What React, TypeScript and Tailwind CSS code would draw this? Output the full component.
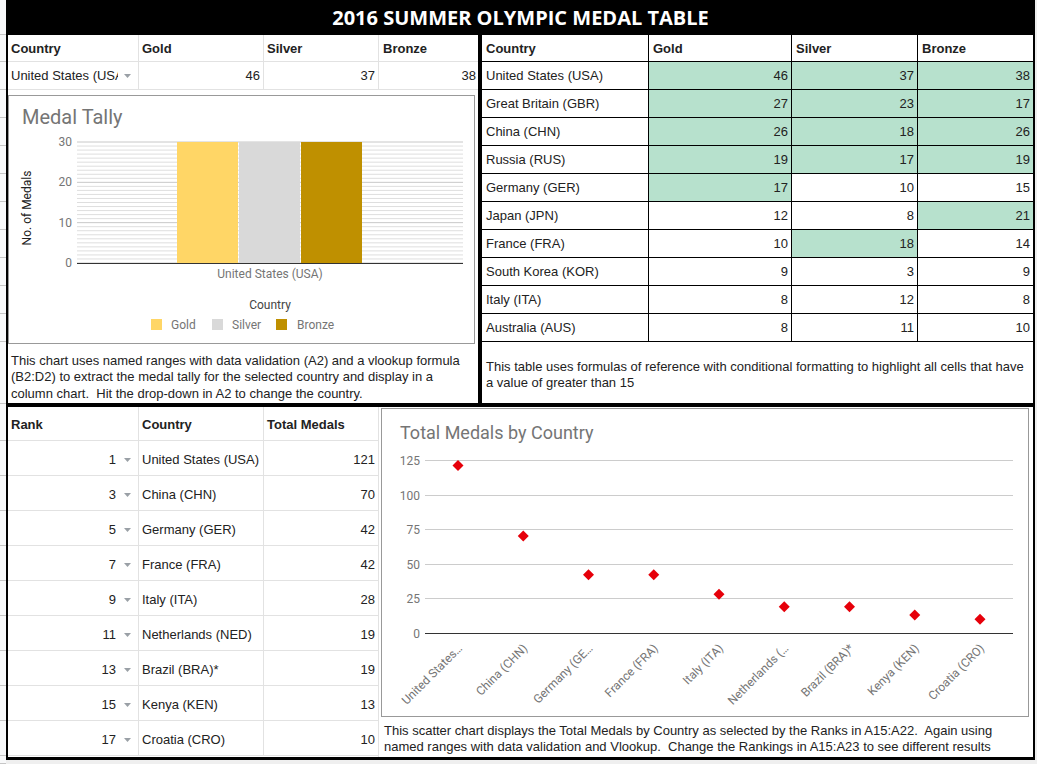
import React from 'react';

type MedalRow = [string, number, number, number];

const medalRows: MedalRow[] = [
  ['United States (USA)', 46, 37, 38],
  ['Great Britain (GBR)', 27, 23, 17],
  ['China (CHN)', 26, 18, 26],
  ['Russia (RUS)', 19, 17, 19],
  ['Germany (GER)', 17, 10, 15],
  ['Japan (JPN)', 12, 8, 21],
  ['France (FRA)', 10, 18, 14],
  ['South Korea (KOR)', 9, 3, 9],
  ['Italy (ITA)', 8, 12, 8],
  ['Australia (AUS)', 8, 11, 10],
];

const rankRows = [
  { rank: 1, country: 'United States (USA)', label: 'United States…', total: 121 },
  { rank: 3, country: 'China (CHN)', label: 'China (CHN)', total: 70 },
  { rank: 5, country: 'Germany (GER)', label: 'Germany (GE…', total: 42 },
  { rank: 7, country: 'France (FRA)', label: 'France (FRA)', total: 42 },
  { rank: 9, country: 'Italy (ITA)', label: 'Italy (ITA)', total: 28 },
  { rank: 11, country: 'Netherlands (NED)', label: 'Netherlands (…', total: 19 },
  { rank: 13, country: 'Brazil (BRA)*', label: 'Brazil (BRA)*', total: 19 },
  { rank: 15, country: 'Kenya (KEN)', label: 'Kenya (KEN)', total: 13 },
  { rank: 17, country: 'Croatia (CRO)', label: 'Croatia (CRO)', total: 10 },
];

// row heights of the sheet, mirrored in the row-header strip on the left
const gutterRows = [
  'h-[35px]', 'h-[27px]',
  'h-[28px]', 'h-[28px]', 'h-[28px]', 'h-[28px]', 'h-[28px]',
  'h-[28px]', 'h-[28px]', 'h-[28px]', 'h-[28px]', 'h-[28px]',
  'h-[62px]', 'h-[37px]',
  'h-[35px]', 'h-[35px]', 'h-[35px]', 'h-[35px]', 'h-[35px]',
  'h-[35px]', 'h-[35px]', 'h-[35px]', 'h-[35px]', 'h-[8px]',
];

const chartNote =
  'This chart uses named ranges with data validation (A2) and a vlookup formula (B2:D2) to extract the medal tally for the selected country and display in a column chart.\u00a0 Hit the drop-down in A2 to change the country.';
const tableNote =
  'This table uses formulas of reference with conditional formatting to highlight all cells that have a value of greater than 15';
const scatterNote =
  'This scatter chart displays the Total Medals by Country as selected by the Ranks in A15:A22.\u00a0 Again using named ranges with data validation and Vlookup.\u00a0 Change the Rankings in A15:A23 to see different results';

const Caret = () => (
  <svg width="7" height="4" viewBox="0 0 7 4" className="shrink-0">
    <path d="M0 0h7L3.5 4z" fill="#9aa0a6" />
  </svg>
);

const MedalTally = () => {
  const top = 142;
  const base = 263;
  const unit = (base - top) / 30;
  const lines = Array.from({ length: 31 }, (_, i) => base - i * unit);

  return (
    <svg width="465" height="247" viewBox="9 96 465 247" className="block font-['Roboto',sans-serif]">
      <text x="22" y="124" fontSize="20" fill="#757575">Medal Tally</text>
      {lines.map((y, i) => (
        <line key={i} x1="77" x2="463" y1={y} y2={y} stroke={i % 10 === 0 ? '#c8c8c8' : '#dedede'} strokeWidth="1" />
      ))}
      {[30, 20, 10, 0].map((v) => (
        <text key={v} x="72" y={base - v * unit + 4} textAnchor="end" fontSize="12" fill="#757575">{v}</text>
      ))}
      <rect x="177" y={top} width="61" height={base - top} fill="#ffd666" />
      <rect x="239" y={top} width="61" height={base - top} fill="#d9d9d9" />
      <rect x="301" y={top} width="61" height={base - top} fill="#bf9000" />
      <line x1="77" x2="463" y1={base + 0.5} y2={base + 0.5} stroke="#333" strokeWidth="1.2" />
      <text x="270" y="278" textAnchor="middle" fontSize="12" fill="#757575">United States (USA)</text>
      <text x="270" y="309" textAnchor="middle" fontSize="12" fill="#444">Country</text>
      <text transform="translate(31 208) rotate(-90)" textAnchor="middle" fontSize="12" fill="#222">No. of Medals</text>
      <rect x="151" y="319" width="11" height="11" fill="#ffd666" />
      <text x="171" y="329" fontSize="12" fill="#757575">Gold</text>
      <rect x="212" y="319" width="11" height="11" fill="#d9d9d9" />
      <text x="232" y="329" fontSize="12" fill="#757575">Silver</text>
      <rect x="276" y="319" width="11" height="11" fill="#bf9000" />
      <text x="297" y="329" fontSize="12" fill="#757575">Bronze</text>
    </svg>
  );
};

const ScatterChart = () => {
  const y0 = 633;
  const k = 1.384;

  return (
    <svg width="646" height="307" viewBox="382 409 646 307" className="block font-['Roboto',sans-serif]">
      <text x="400" y="439" fontSize="18" fill="#757575">Total Medals by Country</text>
      {[0, 25, 50, 75, 100, 125].map((v) => {
        const y = Math.round(y0 - v * k) + 0.5;
        return (
          <g key={v}>
            <line x1="425" x2="1013" y1={y} y2={y} stroke={v === 0 ? '#333' : '#cccccc'} />
            <text x="420" y={y + 4} textAnchor="end" fontSize="12" fill="#757575">{v}</text>
          </g>
        );
      })}
      {rankRows.map((r, i) => {
        const x = 458 + i * 65.25;
        const y = y0 - r.total * k;
        return (
          <g key={r.rank}>
            <path d={`M${x} ${y - 5.5}L${x + 5.5} ${y}L${x} ${y + 5.5}L${x - 5.5} ${y}Z`} fill="#e6000a" />
            <text transform={`translate(${x + 5} 649) rotate(-45)`} textAnchor="end" fontSize="12" fill="#757575">
              {r.label}
            </text>
          </g>
        );
      })}
    </svg>
  );
};

export default function App() {
  return (
    <div className="flex h-[764px] w-[1037px] overflow-hidden bg-[#efefef] font-['Liberation_Sans',Arial,sans-serif] text-[13px] text-[#222]">
      <div className="flex w-[6px] shrink-0 flex-col bg-[#f8f9fa]">
        {gutterRows.map((h, i) => (
          <div key={i} className={`${h} shrink-0 border-b border-[#c6c6c6]`} />
        ))}
      </div>

      <div className="flex h-[760px] w-[1029px] shrink-0 flex-col border-x-2 border-b-[3px] border-black bg-white">
        <div className="flex h-[35px] shrink-0 items-center justify-center bg-black font-['Open_Sans',sans-serif] text-[20px] font-bold text-white">
          2016 SUMMER OLYMPIC MEDAL TABLE
        </div>

        <div className="flex h-[368px] shrink-0">
          {/* selected country + column chart */}
          <div className="flex w-[470px] shrink-0 flex-col">
            <div className="grid h-[27px] shrink-0 grid-cols-[131px_125px_115px_99px] border-b border-[#e2e2e2] font-bold">
              <div className="flex items-center border-r border-[#e2e2e2] pl-[3px] pt-[2px]">Country</div>
              <div className="flex items-center border-r border-[#e2e2e2] pl-[3px] pt-[2px]">Gold</div>
              <div className="flex items-center border-r border-[#e2e2e2] pl-[3px] pt-[2px]">Silver</div>
              <div className="flex items-center pl-[4px] pt-[2px]">Bronze</div>
            </div>
            <div className="grid h-[28px] shrink-0 grid-cols-[131px_125px_115px_99px] border-b border-[#e2e2e2]">
              <div className="flex items-center gap-[6px] border-r border-[#e2e2e2] pl-[3px] pr-[7px] pt-[1px]">
                <span className="flex-1 overflow-hidden whitespace-nowrap">United States (USA)</span>
                <Caret />
              </div>
              <div className="flex items-center justify-end border-r border-[#e2e2e2] pr-[3px] pt-[1px]">46</div>
              <div className="flex items-center justify-end border-r border-[#e2e2e2] pr-[3px] pt-[1px]">37</div>
              <div className="flex items-center justify-end pr-[2px] pt-[1px]">38</div>
            </div>
            <div className="mt-[5px] h-[249px] w-[467px] shrink-0 border border-[#999]">
              <MedalTally />
            </div>
            <div className="flex flex-1 items-end px-[3px] pb-[1px] leading-[16.5px]">
              <p>{chartNote}</p>
            </div>
          </div>

          <div className="w-[4px] shrink-0 bg-black" />

          {/* conditional formatting table */}
          <div className="flex flex-1 flex-col">
            <div className="grid h-[27px] shrink-0 grid-cols-[167px_143px_126px_1fr] border-b border-black font-bold">
              <div className="flex items-center border-r border-black pl-[4px] pt-[2px]">Country</div>
              <div className="flex items-center border-r border-black pl-[4px] pt-[2px]">Gold</div>
              <div className="flex items-center border-r border-black pl-[4px] pt-[2px]">Silver</div>
              <div className="flex items-center pl-[4px] pt-[2px]">Bronze</div>
            </div>
            {medalRows.map(([country, g, s, b]) => (
              <div key={country} className="grid h-[28px] shrink-0 grid-cols-[167px_143px_126px_1fr] border-b border-black">
                <div className="flex items-center border-r border-black pl-[4px] pt-[1px]">{country}</div>
                {[g, s, b].map((v, i) => (
                  <div
                    key={i}
                    className={`flex items-center justify-end pr-[3px] pt-[1px] ${i < 2 ? 'border-r border-black' : ''} ${v > 15 ? 'bg-[#b7e1cd]' : ''}`}
                  >
                    {v}
                  </div>
                ))}
              </div>
            ))}
            <div className="flex flex-1 items-center px-[4px] pt-[4px] leading-[16px]">
              <p>{tableNote}</p>
            </div>
          </div>
        </div>

        <div className="h-[4px] shrink-0 bg-black" />

        <div className="flex h-[350px] shrink-0">
          {/* rank picker table */}
          <div className="flex w-[371px] shrink-0 flex-col border-r border-[#e2e2e2]">
            <div className="grid h-[34px] shrink-0 grid-cols-[131px_125px_1fr] border-b border-[#e2e2e2] font-bold">
              <div className="flex items-center border-r border-[#e2e2e2] pl-[3px] pt-[2px]">Rank</div>
              <div className="flex items-center border-r border-[#e2e2e2] pl-[3px] pt-[2px]">Country</div>
              <div className="flex items-center pl-[3px] pt-[2px]">Total Medals</div>
            </div>
            {rankRows.map((r) => (
              <div key={r.rank} className="grid h-[35px] shrink-0 grid-cols-[131px_125px_1fr] border-b border-[#e2e2e2]">
                <div className="flex items-center justify-end gap-[8px] border-r border-[#e2e2e2] pr-[7px] pt-[3px]">
                  <span>{r.rank}</span>
                  <Caret />
                </div>
                <div className="flex items-center border-r border-[#e2e2e2] pl-[3px] pt-[3px]">{r.country}</div>
                <div className="flex items-center justify-end pr-[3px] pt-[3px]">{r.total}</div>
              </div>
            ))}
          </div>

          {/* scatter chart */}
          <div className="flex flex-1 flex-col pl-[2px]">
            <div className="mt-[1px] h-[309px] w-[648px] shrink-0 border border-[#999]">
              <ScatterChart />
            </div>
            <div className="flex flex-1 items-center pl-[3px] pt-[3px] leading-[16px]">
              <p>{scatterNote}</p>
            </div>
          </div>
        </div>
      </div>
    </div>
  );
}
